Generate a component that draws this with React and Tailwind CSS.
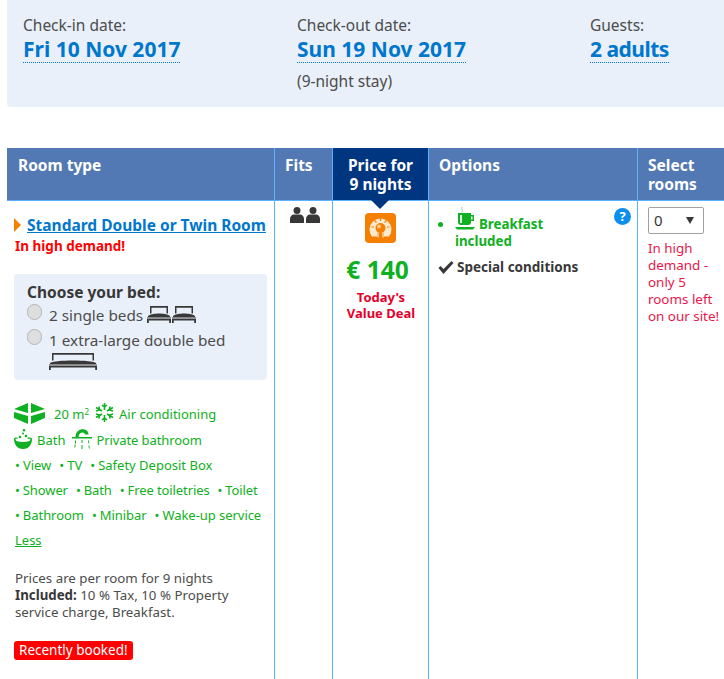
import { useState } from 'react';

const Bed = ({ w = 24 }) => (
  <svg width={w} height="17" viewBox={`0 0 ${w} 17`} className="inline-block" fill="#383838">
    <path d={`M3 0h${w - 6}v7.500h-1.500V1.800H4.500V7.500H3z`} />
    <path d={`M1 10c3-3.500 ${w - 5}-3.500 ${w - 2} 0v1H1z`} />
    <path d={`M0 11h${w}v1H0z`} fill="#8a8a8a" />
    <path d={`M0 12.500h${w}V17h-1.800v-2.500H1.800V17H0z`} />
  </svg>
);

const Info = ({ label, value, note, valueClass = '' }) => (
  <div>
    <div className="text-[15.500px] leading-5 text-[#4c4c4c]">{label}</div>
    <div className="mt-[2px] flex">
      <span className={`border-b border-dotted border-[#0077cc] text-[21px] leading-[25px] font-bold text-[#0077cc] ${valueClass}`}>
        {value}
      </span>
    </div>
    {note && <div className="mt-[8px] text-[15.500px] leading-5 text-[#4c4c4c]">{note}</div>}
  </div>
);

const Head = ({ children, className = '' }) => (
  <div className={`px-[10px] pt-[8px] text-[15.500px] leading-[19px] font-bold text-white ${className}`}>{children}</div>
);

const Radio = () => (
  <span className="h-[16px] w-[15px] shrink-0 rounded-full border border-[#b5b5b5] bg-[#dedede]" />
);

const Feature = ({ children }) => (
  <span>
    <span className="mr-[3px]">•</span>
    {children}
  </span>
);

export default function App() {
  const [qty, setQty] = useState('0');

  return (
    <div className="h-[679px] w-[724px] overflow-hidden bg-white pl-[7px] text-[#383838] font-['Noto_Sans','Open_Sans',sans-serif]">
      <div className="flex h-[107px] rounded-bl-[4px] bg-[#e9f0fa] pl-[16px] pt-[15px]">
        <div className="w-[274px]"><Info label="Check-in date:" value="Fri 10 Nov 2017" /></div>
        <div className="w-[293px]"><Info label="Check-out date:" value="Sun 19 Nov 2017" note="(9-night stay)" /></div>
        <Info label="Guests:" value="2 adults" valueClass="tracking-[-0.5px]" />
      </div>

      <div className="mt-[41px] grid h-[53px] grid-cols-[268px_58px_95px_210px_86px] border-b border-[#5bb0ff] bg-[#5279b3]">
        <Head className="border-r border-[#5bb0ff] pl-[11px]">Room type</Head>
        <Head className="border-r border-[#5bb0ff]">Fits</Head>
        <div className="relative bg-[#003580] pt-[8px] text-center text-[15.500px] leading-[19px] font-bold text-white">
          Price for<br />9 nights
          <span className="absolute left-[38px] top-[52px] h-0 w-0 border-x-[9px] border-t-[9px] border-x-transparent border-t-[#003580]" />
        </div>
        <Head className="border-x border-[#5bb0ff]">Options</Head>
        <Head>Select<br />rooms</Head>
      </div>

      <div className="grid h-[480px] grid-cols-[268px_58px_95px_210px_86px]">
        <div className="border-r border-[#5bb0ff] pl-[8px] pr-[6px]">
          <div className="mt-[14px] -ml-[1px] flex items-center">
            <span className="mr-[6px] h-0 w-0 border-y-[7px] border-l-[7px] border-y-transparent border-l-[#f58000]" />
            <a className="text-[15.500px] leading-[20px] font-bold text-[#0077cc] underline">Standard Double or Twin Room</a>
          </div>
          <div className="mt-[3px] text-[13.500px] leading-[17px] font-bold text-[#ff0000]">In high demand!</div>

          <div className="mt-[19px] -ml-[1px] h-[106px] w-[253px] rounded-[4px] bg-[#e9f0fa] pl-[13px] pt-[9px]">
            <div className="text-[15.500px] leading-[19px] font-bold text-[#383838]">Choose your bed:</div>
            <label className="mt-[2px] flex items-start gap-[7px] text-[15.300px] leading-[20px] text-[#4c4c4c]">
              <Radio />
              <span className="flex items-center gap-[4px] pt-[1px]">2 single beds <span className="-mt-[2px] flex gap-[1px]"><Bed /><Bed /></span></span>
            </label>
            <label className="mt-[4px] flex items-start gap-[7px] text-[15.300px] leading-[20px] text-[#4c4c4c]">
              <Radio />
              <span className="pt-[1px]">1 extra-large double bed<br /><Bed w={48} /></span>
            </label>
          </div>

          <div className="mt-[22px] text-[13px] text-[#0fb021]">
            <div className="flex h-[26px] items-center">
              <svg className="-ml-[1px] -mt-[4px]" width="31" height="21" viewBox="0 0 31 21" fill="#0fb021">
                <path d="M0 6 14 0v10L0 6zM17 0l14 6-14 4V0zM0 9l14 4v8L0 15zM31 9l-14 4v8l14-6z" />
              </svg>
              <span className="ml-[9px]">20 m<sup className="text-[8px]">2</sup></span>
              <svg className="ml-[6px] -mt-[6px]" width="19" height="19" viewBox="0 0 19 19" stroke="#0fb021" strokeWidth="1.600" fill="none">
                <path d="M9.500 0v7M9.500 12v7M7 2l2.500 2L12 2M7 17l2.500-2 2.500 2" />
                <path d="M1 4.500l6 3.500M12 11l6 3.500M18 4.500L12 8M7 11l-6 3.500" />
                <path d="M1 8l3.500-1L4 3.500M18 8l-3.500-1 .5-3.500M1 11l3.500 1L4 15.500M18 11l-3.500 1 .5 3.500" />
              </svg>
              <span className="ml-[5px]">Air conditioning</span>
            </div>
            <div className="flex h-[25px] items-center">
              <svg className="-ml-[1px] -mt-[4px]" width="18" height="20" viewBox="0 0 18 20" fill="#0fb021">
                <circle cx="10" cy="1.200" r="1.200" /><circle cx="9" cy="4.500" r="1" /><circle cx="12" cy="7" r="1.300" /><circle cx="6" cy="8" r="1.300" />
                <path d="M0 10c0-1 1-1.500 2-1.500h1.500v1.200H1.500c0 1 .5 1.800 1 2.300 4 1.200 9 1.200 13 0 .5-.5 1-1.300 1-2.300h-3V8.500H16c1 0 2 .5 2 1.500 0 5-3 10-9 10S0 15 0 10z" />
              </svg>
              <span className="ml-[5px]">Bath</span>
              <svg className="ml-[7px] -mt-[4px]" width="20" height="20" viewBox="0 0 20 20" fill="#0fb021">
                <path d="M3.500 8C3.500-2 16.500-2 16.500 5.500H13C12.500 2.500 7 2.500 6.500 8z" />
                <path d="M0 8h20v1.500H0zM3 12l1-1v3l-1 1zM9.500 11h1v3h-1zM16 11l1 1 .3 3-1-1zM2.500 16l1-1v3l-1 1zM9.500 16h1v4h-1zM16.500 16l1 1 .3 3-1-1z" />
              </svg>
              <span className="ml-[4px] tracking-[-0.1px]">Private bathroom</span>
            </div>
            <div className="flex h-[25px] items-center gap-[8px]"><Feature>View</Feature><Feature>TV</Feature><Feature>Safety Deposit Box</Feature></div>
            <div className="flex h-[25px] items-center gap-[8px] tracking-[-0.1px]"><Feature>Shower</Feature><Feature>Bath</Feature><Feature>Free toiletries</Feature><Feature>Toilet</Feature></div>
            <div className="flex h-[25px] items-center gap-[8px] tracking-[-0.05px]"><Feature>Bathroom</Feature><Feature>Minibar</Feature><Feature>Wake-up service</Feature></div>
            <div className="flex h-[25px] items-center"><a className="underline">Less</a></div>
          </div>

          <p className="mt-[17px] text-[13.300px] leading-[17px] text-[#4c4c4c]">
            Prices are per room for 9 nights<br />
            <b className="text-[#383838]">Included:</b> 10 % Tax, 10 % Property service charge, Breakfast.
          </p>
          <div className="mt-[20px] -ml-[1px] w-fit rounded-[3px] bg-[#ff0000] px-[5px] text-[13.500px] leading-[19px] text-white">Recently booked!</div>
        </div>

        <div className="border-r border-[#5bb0ff] pl-[15px] pt-[6px]">
          <svg width="30" height="16" viewBox="0 0 30 16" fill="#383838">
            <circle cx="7" cy="3.500" r="3.500" /><path d="M0 16v-4c0-3 2-4.500 4-4.500h6c2 0 4 1.500 4 4.500v4z" />
            <circle cx="23" cy="3.500" r="3.500" /><path d="M16 16v-4c0-3 2-4.500 4-4.500h6c2 0 4 1.500 4 4.500v4z" />
          </svg>
        </div>

        <div className="flex flex-col items-center pt-[12px] text-center">
          <svg width="31" height="30" viewBox="0 0 31 30">
            <rect width="31" height="30" rx="4" fill="#f58000" />
            <path d="M7 23.500a11 11 0 1 1 17 0h-5v-4h-7v4z" fill="#fde8d0" />
            <circle cx="15.500" cy="15" r="5" fill="#f58000" />
            <circle cx="14" cy="13.500" r="2" fill="#fbc78c" />
            <path d="M13 19.500v5M18 19.500v5" stroke="#fde8d0" strokeWidth="1.200" />
            <path d="M15.500 5v3M9.500 7.500l2 2M21.500 7.500l-2 2M6.500 14h2.500M22 14h2.500" stroke="#f58000" strokeWidth="1.200" />
          </svg>
          <div className="mt-[12px] mr-[6px] text-[24.500px] leading-[30px] font-bold text-[#0fb021]">€ 140</div>
          <div className="mt-[4px] ml-[1px] text-[13px] leading-[16px] font-bold text-[#e4002b]">Today's<br />Value Deal</div>
        </div>

        <div className="relative border-x border-[#5bb0ff] pl-[9px] pt-[15px]">
          <svg className="absolute left-[185px] top-[7px]" width="17" height="17" viewBox="0 0 17 17">
            <circle cx="8.500" cy="8.500" r="8.500" fill="#0a8fec" />
            <text x="8.500" y="13" textAnchor="middle" fontSize="13" fontWeight="700" fill="#fff" fontFamily="Noto Sans">?</text>
          </svg>
          <div className="flex text-[13.300px] leading-[17px] font-bold text-[#0fb021]">
            <span className="mt-[6px] mr-[12px] h-[5px] w-[5px] shrink-0 rounded-full bg-[#0fb021]" />
            <div>
              <svg className="-mt-[9px] mb-[3px] mr-[4px] inline-block align-bottom" width="20" height="23" viewBox="0 0 20 23">
                <path d="M7 0c-1 2 1 2 0 5" stroke="#8fd79a" fill="none" />
                <path d="M3 6h13v2h3v6h-3v1c0 2-1 3-3 3H6c-2 0-3-1-3-3z" fill="#0fb021" />
                <path d="M5 8h2v8H5z" fill="#e6f7e8" />
                <path d="M16 9.500h1.500v3H16z" fill="#fff" />
                <path d="M0 20h20l-2 2.500H2z" fill="#0fb021" />
              </svg>
              Breakfast<br />included
            </div>
          </div>
          <div className="mt-[9px] flex items-center text-[13.500px] leading-[17px] font-bold text-[#383838]">
            <svg className="mr-[3px]" width="16" height="13" viewBox="0 0 15 13" fill="#383838"><path d="M0 7l2-2 3 3 8-8 2 2L5 13z" /></svg>
            Special conditions
          </div>
        </div>

        <div className="pl-[10px] pt-[6px]">
          <div className="relative flex h-[27px] w-[56px] items-center rounded-[2px] border border-[#a0a0a0] bg-white pl-[5px] text-[15px] text-[#383838]">
            <select value={qty} onChange={(e) => setQty(e.target.value)} className="w-full appearance-none bg-transparent outline-none">
              <option value="0">0</option>
              <option value="1">1</option>
            </select>
            <span className="pointer-events-none absolute right-[9px] top-[9px] h-0 w-0 border-x-[4px] border-t-[7px] border-x-transparent border-t-[#383838]" />
          </div>
          <div className="mt-[6px] text-[13.400px] leading-[17px] text-[#e8174b]">
            In high<br />demand -<br />only 5<br />rooms left<br />on our site!
          </div>
        </div>
      </div>
    </div>
  );
}
